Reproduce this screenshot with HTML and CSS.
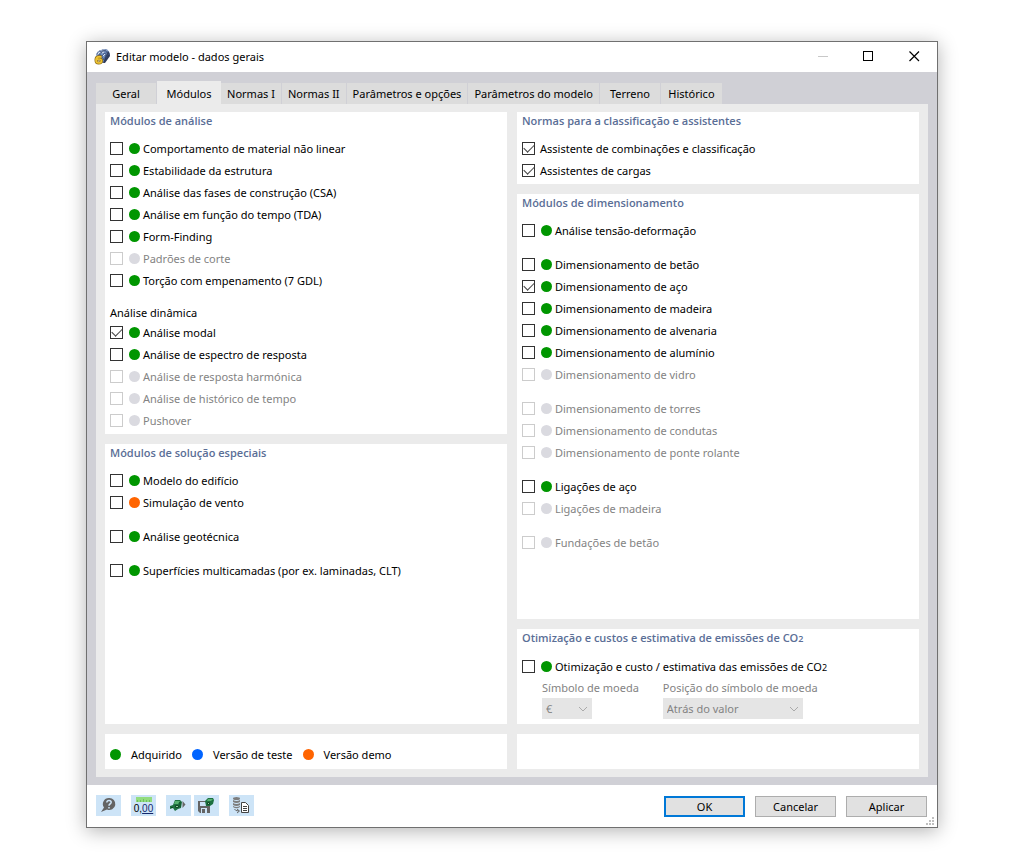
FILE: index.html
```html
<!DOCTYPE html>
<html lang="pt">
  <head>
    <meta charset="utf-8">
    <title>Editar modelo - dados gerais</title>
    <link rel="stylesheet" href="styles.css">
  </head>
  <body>
    <div class="window">
      <header class="titlebar">
        <svg class="app-icon" width="17" height="17" viewBox="0 0 17 17">
          <path d="M2 7 Q3 3 7 2 L12 1 Q16 3 16 7 L11 14 L8 15 Z" fill="#6f8cbd"/>
          <path d="M2 7 Q3 3 7 2 L12 1 L14 2 L9 4 Q6 5 5 8 Z" fill="#8fa3c6"/>
          <path d="M14 3 Q16 5 16 8 L11 15 L9 15 Q11 9 14 3 Z" fill="#2f3c5c"/>
          <path d="M3 5 L7 7 L10 12 M5 3 L10 5 L13 10 M8 2 L12 3 L15 7 M4 8 Q6 4 12 2 M7 9 Q9 6 14 4 M9 12 Q11 8 15 6" stroke="#3c4f78" stroke-width="0.7" fill="none"/>
          <path d="M4 6 L6 4 M8 5 L10 4 M9 8 L11 6" stroke="#dbe7f8" fill="none"/>
          <path d="M7.500 8.800 H4.500 Q2 9 2 12 Q2 15 4.700 15 Q7.500 15 7.500 12.700 Q7.500 11 5 11 Q3.500 11 2.500 12" fill="none" stroke="#8a6a14" stroke-width="3"/>
          <path d="M7.500 8.800 H4.500 Q2 9 2 12 Q2 15 4.700 15 Q7.500 15 7.500 12.700 Q7.500 11 5 11 Q3.500 11 2.500 12" fill="none" stroke="#edc233" stroke-width="1.700"/>
        </svg>
        <h1>Editar modelo - dados gerais</h1>
        <div class="window-controls">
          <button type="button" aria-label="Minimizar" disabled>
            <svg width="11" height="11" viewBox="0 0 11 11"><path d="M1 5.500 H11" stroke="#c8c8c8"/></svg>
          </button>
          <button type="button" aria-label="Maximizar">
            <svg width="11" height="11" viewBox="0 0 11 11"><rect x="0.5" y="0.5" width="9" height="9" fill="none" stroke="#000"/></svg>
          </button>
          <button type="button" aria-label="Fechar">
            <svg width="11" height="11" viewBox="0 0 11 11"><path d="M0.5 0.5 L10 10 M10 0.5 L0.5 10" stroke="#000" stroke-width="1.2"/></svg>
          </button>
        </div>
      </header>

      <main class="content">
        <div class="tabs" role="tablist">
          <button type="button" class="tab" role="tab">Geral</button>
          <button type="button" class="tab active" role="tab" aria-selected="true">Módulos</button>
          <button type="button" class="tab" role="tab">Normas I</button>
          <button type="button" class="tab" role="tab">Normas II</button>
          <button type="button" class="tab" role="tab">Parâmetros e opções</button>
          <button type="button" class="tab" role="tab">Parâmetros do modelo</button>
          <button type="button" class="tab" role="tab">Terreno</button>
          <button type="button" class="tab" role="tab">Histórico</button>
        </div>

        <div class="tab-content" role="tabpanel">
          <div class="columns">
            <div class="column">
              <section class="card">
                <h2>Módulos de análise</h2>
                <label class="option"><input type="checkbox"><span class="dot green"></span>Comportamento de material não linear</label>
                <label class="option"><input type="checkbox"><span class="dot green"></span>Estabilidade da estrutura</label>
                <label class="option"><input type="checkbox"><span class="dot green"></span>Análise das fases de construção (CSA)</label>
                <label class="option"><input type="checkbox"><span class="dot green"></span>Análise em função do tempo (TDA)</label>
                <label class="option"><input type="checkbox"><span class="dot green"></span>Form-Finding</label>
                <label class="option disabled"><input type="checkbox" disabled><span class="dot"></span>Padrões de corte</label>
                <label class="option"><input type="checkbox"><span class="dot green"></span>Torção com empenamento (7 GDL)</label>
                <h3>Análise dinâmica</h3>
                <label class="option"><input type="checkbox" checked><span class="dot green"></span>Análise modal</label>
                <label class="option"><input type="checkbox"><span class="dot green"></span>Análise de espectro de resposta</label>
                <label class="option disabled"><input type="checkbox" disabled><span class="dot"></span>Análise de resposta harmónica</label>
                <label class="option disabled"><input type="checkbox" disabled><span class="dot"></span>Análise de histórico de tempo</label>
                <label class="option disabled"><input type="checkbox" disabled><span class="dot"></span>Pushover</label>
              </section>

              <section class="card grow">
                <h2>Módulos de solução especiais</h2>
                <label class="option"><input type="checkbox"><span class="dot green"></span>Modelo do edifício</label>
                <label class="option"><input type="checkbox"><span class="dot orange"></span>Simulação de vento</label>
                <label class="option spaced"><input type="checkbox"><span class="dot green"></span>Análise geotécnica</label>
                <label class="option spaced"><input type="checkbox"><span class="dot green"></span>Superfícies multicamadas (por ex. laminadas, CLT)</label>
              </section>
            </div>

            <div class="column">
              <section class="card">
                <h2>Normas para a classificação e assistentes</h2>
                <label class="option plain"><input type="checkbox" checked>Assistente de combinações e classificação</label>
                <label class="option plain"><input type="checkbox" checked>Assistentes de cargas</label>
              </section>

              <section class="card grow">
                <h2>Módulos de dimensionamento</h2>
                <label class="option"><input type="checkbox"><span class="dot green"></span>Análise tensão-deformação</label>
                <label class="option spaced"><input type="checkbox"><span class="dot green"></span>Dimensionamento de betão</label>
                <label class="option"><input type="checkbox" checked><span class="dot green"></span>Dimensionamento de aço</label>
                <label class="option"><input type="checkbox"><span class="dot green"></span>Dimensionamento de madeira</label>
                <label class="option"><input type="checkbox"><span class="dot green"></span>Dimensionamento de alvenaria</label>
                <label class="option"><input type="checkbox"><span class="dot green"></span>Dimensionamento de alumínio</label>
                <label class="option disabled"><input type="checkbox" disabled><span class="dot"></span>Dimensionamento de vidro</label>
                <label class="option spaced disabled"><input type="checkbox" disabled><span class="dot"></span>Dimensionamento de torres</label>
                <label class="option disabled"><input type="checkbox" disabled><span class="dot"></span>Dimensionamento de condutas</label>
                <label class="option disabled"><input type="checkbox" disabled><span class="dot"></span>Dimensionamento de ponte rolante</label>
                <label class="option spaced"><input type="checkbox"><span class="dot green"></span>Ligações de aço</label>
                <label class="option disabled"><input type="checkbox" disabled><span class="dot"></span>Ligações de madeira</label>
                <label class="option spaced disabled"><input type="checkbox" disabled><span class="dot"></span>Fundações de betão</label>
              </section>

              <section class="card">
                <h2>Otimização e custos e estimativa de emissões de CO<small>2</small></h2>
                <label class="option"><input type="checkbox"><span class="dot green"></span><span>Otimização e custo / estimativa das emissões de CO<small>2</small></span></label>
                <div class="fields">
                  <div class="field">
                    <label for="currency">Símbolo de moeda</label>
                    <select id="currency" class="currency" disabled><option>€</option></select>
                  </div>
                  <div class="field">
                    <label for="currency-position">Posição do símbolo de moeda</label>
                    <select id="currency-position" class="position" disabled><option>Atrás do valor</option></select>
                  </div>
                </div>
              </section>
            </div>
          </div>

          <div class="columns">
            <div class="card legend">
              <span class="legend-item"><span class="dot green"></span>Adquirido</span>
              <span class="legend-item"><span class="dot blue"></span>Versão de teste</span>
              <span class="legend-item"><span class="dot orange"></span>Versão demo</span>
            </div>
            <div class="card legend"></div>
          </div>
        </div>
      </main>

      <footer class="footer">
        <div class="tools">
          <button type="button" class="tool" aria-label="Ajuda">
            <svg width="25" height="21" viewBox="0 0 25 21">
              <path d="M13 3 A6 6 0 1 1 11 14.500 L5 17 L8 12.500 A6 6 0 0 1 13 3 Z" fill="#646464"/>
              <path d="M10.800 7.500 Q11 5.500 13 5.500 Q15.200 5.500 15.200 7.300 Q15.200 8.300 14 9 Q13 9.600 13 10.800 M13 12 V13.500" fill="none" stroke="#cde4f7" stroke-width="1.500"/>
            </svg>
          </button>
          <button type="button" class="tool units" aria-label="Unidades">
            <svg width="16" height="6" viewBox="0 0 16 6">
              <rect width="16" height="5" fill="#92dc7e"/>
              <path d="M1.500 5 V3 M4.500 5 V3 M7.500 5 V2 M10.500 5 V3 M13.500 5 V3" stroke="#6cbf5e"/>
            </svg>
            <span>0,<u>00</u></span>
          </button>
          <button type="button" class="tool" aria-label="Carregar">
            <svg width="25" height="21" viewBox="0 0 25 21">
              <path d="M4 11 L7 10 L9 5 L14 5 L16 7 L15 13 L12 14 L9 16 L7 13 L4 14 Z" fill="#1d7040"/>
              <path d="M9 6 L14 6 L12 9 L8 9 Z" fill="#56b070"/>
              <path d="M9.500 10.500 H12.500 V12.500 H9.500 Z M5 12.500 H7" fill="#8fd09c" stroke="#0f4a28"/>
              <path d="M14 7 L14 12" stroke="#0f4a28"/>
              <path d="M16.500 6 L19.500 9.500 L16.500 13 Z" fill="#666"/>
            </svg>
          </button>
          <button type="button" class="tool joined" aria-label="Guardar">
            <svg width="25" height="21" viewBox="0 0 25 21">
              <path d="M4 6 H16 V18 H6 L4 16 Z" fill="#646464"/>
              <path d="M6 7 H12 V11 H6 Z M7 13 H13 V18 H7 Z" fill="#cde4f7"/>
              <rect x="8" y="14" width="3" height="4" fill="#646464"/>
              <path d="M11 6 L14 3 L19 3 L20 5 L19 9 L16 11 L12 11 Z" fill="#1d7040"/>
              <path d="M14 4 L19 4 L17 6 L13 6 Z" fill="#56b070"/>
              <path d="M13.500 7.500 H15.500 V9.500 H13.500 Z" fill="#8fd09c" stroke="#0f4a28"/>
            </svg>
          </button>
          <button type="button" class="tool" aria-label="Importar">
            <svg width="25" height="21" viewBox="0 0 25 21">
              <ellipse cx="7.500" cy="3.500" rx="3.500" ry="1.500" fill="#7d7d7d"/>
              <path d="M4 5 Q7.500 7 11 5 V7 Q7.500 9 4 7 Z M4 8 Q7.500 10 11 8 V10 Q7.500 12 4 10 Z M4 11 Q7.500 13 11 11 V12 Q7.500 14.500 4 12 Z" fill="#7d7d7d"/>
              <path d="M5.500 14 Q6 16 10 16 M8 14 L10.500 16 L8 18" stroke="#666" fill="none"/>
              <path d="M12.500 7.500 H16.500 L19.500 10.500 V17.500 H12.500 Z" fill="#fff" stroke="#444"/>
              <path d="M14 11.500 H18 M14 13.500 H18 M14 15.500 H18" stroke="#444"/>
            </svg>
          </button>
        </div>
        <div class="actions">
          <button type="button" class="action default">OK</button>
          <button type="button" class="action">Cancelar</button>
          <button type="button" class="action">Aplicar</button>
        </div>
        <svg class="grip" width="8" height="8" viewBox="0 0 8 8" fill="#bfbfbf">
          <path d="M6 0h2v2h-2z M3 3h2v2h-2z M6 3h2v2h-2z M0 6h2v2h-2z M3 6h2v2h-2z M6 6h2v2h-2z"/>
        </svg>
      </footer>
    </div>
  </body>
</html>
```

FILE: styles.css
```css
* {
  box-sizing: border-box;
}
body {
  margin: 0;
  padding: 41px 90px 40px 86px;
  min-height: 100vh;
  display: flex;
  background: #fff;
  color: #000;
  font-family: "Noto Sans", "Open Sans", sans-serif;
  font-size: 11px;
}
button, select {
  font: inherit;
  color: inherit;
}
button {
  padding: 0;
  border: none;
  background: none;
}
.window {
  flex: 1;
  display: flex;
  flex-direction: column;
  border: 1px solid #707070;
  background: #fff;
  box-shadow: 0 3px 18px rgba(0, 0, 0, 0.3);
}

/* title bar */
.titlebar {
  display: flex;
  align-items: center;
  height: 30px;
  padding: 0 0 2px 7px;
}
.titlebar h1 {
  flex: 1;
  margin: 0 0 0 5px;
  font-size: 11px;
  font-weight: normal;
}
.window-controls {
  display: flex;
}
.window-controls button {
  width: 46px;
  height: 28px;
  display: flex;
  align-items: center;
  justify-content: center;
}

/* tabs */
.content {
  flex: 1;
  display: flex;
  flex-direction: column;
  padding: 9px 9px 8px;
  background: #d0d0d6;
}
.tabs {
  display: flex;
  align-items: flex-end;
}
.tab {
  height: 21px;
  min-width: 61px;
  padding: 0 6px;
  background: #dcdcdc;
  border-right: 1px solid #d0d0d6;
}
.tab:last-child {
  border-right: none;
}
.tab.active {
  height: 23px;
  min-width: 64px;
  padding: 2px 9px 0;
  background: #ebebeb;
  border-right: none;
}
.tab-content {
  flex: 1;
  display: flex;
  flex-direction: column;
  gap: 10px;
  padding: 8px 9px;
  background: #ebebeb;
}
.columns {
  display: flex;
  gap: 10px;
}
.columns:first-child {
  flex: 1;
}
.column {
  flex: 1 1 0;
  display: flex;
  flex-direction: column;
  gap: 10px;
}

/* cards */
.card {
  padding: 0 5px 3px;
  background: #fff;
}
.card.grow {
  flex: 1;
}
.card h2 {
  margin: 0 0 7px;
  font-family: "Open Sans", "Noto Sans", sans-serif;
  font-size: 11px;
  font-weight: 600;
  line-height: 18px;
  color: #5a6e96;
}
.card h3 {
  margin: 14px 0 0;
  font-size: 11px;
  font-weight: normal;
  line-height: 16px;
}
.card small {
  font-size: 9px;
}
.option {
  display: flex;
  align-items: center;
  height: 22px;
}
.option.spaced {
  margin-top: 12px;
}
.option input {
  appearance: none;
  width: 13px;
  height: 13px;
  margin: 0 6px 0 0;
  border: 1px solid #333;
  background: #fff;
}
.option.plain input {
  margin-right: 5px;
}
.option input:checked::before {
  content: "";
  display: block;
  width: 9px;
  height: 5px;
  margin: 1px 0 0 1px;
  border: solid #444;
  border-width: 0 0 1px 1px;
  transform: rotate(-45deg);
}
.option.disabled {
  color: #838383;
}
.option.disabled input {
  border-color: #ccc;
}
.dot {
  width: 11px;
  height: 11px;
  margin-right: 3px;
  border-radius: 50%;
  background: #dadae0;
}
.dot.green {
  background: #009600;
}
.dot.blue {
  background: #0064ff;
}
.dot.orange {
  background: #ff6400;
}

/* currency fields */
.fields {
  display: flex;
  gap: 24px;
  padding: 0 0 2px 20px;
  color: #838383;
}
.field {
  display: flex;
  flex-direction: column;
}
.field label {
  line-height: 21px;
}
.field select {
  appearance: none;
  height: 21px;
  padding: 0 4px;
  border: none;
  border-radius: 0;
  opacity: 1;
  color: #838383;
  background: #e5e5e5 url("data:image/svg+xml,%3Csvg xmlns='http://www.w3.org/2000/svg' width='10' height='6'%3E%3Cpath d='M1 1 L5 5 L9 1' fill='none' stroke='%23aaa'/%3E%3C/svg%3E") no-repeat right 4px center;
}
.currency {
  width: 50px;
}
.position {
  width: 140px;
}

/* legend */
.legend {
  flex: 1 1 0;
  display: flex;
  align-items: center;
  gap: 10px;
  height: 35px;
  padding: 6px 5px 0;
}
.legend-item {
  display: flex;
  align-items: center;
}
.legend .dot {
  margin-right: 10px;
}

/* footer */
.footer {
  position: relative;
  display: flex;
  justify-content: space-between;
  height: 42px;
  padding: 10px 10px 0 9px;
}
.tools, .actions {
  display: flex;
  gap: 10px;
}
.tool {
  width: 25px;
  height: 21px;
  background: #cde4f7;
}
.tool svg {
  display: block;
}
.tool.joined {
  margin-left: -7px;
}
.tool.units {
  display: flex;
  flex-direction: column;
  align-items: center;
  padding-top: 2px;
  font-family: "Liberation Sans", sans-serif;
  font-size: 10px;
  line-height: 11px;
}
.tool.units u {
  color: #14286e;
}
.action {
  width: 81px;
  height: 21px;
  margin-top: 1px;
  border: 1px solid #adadad;
  background: #e1e1e1;
}
.action.default {
  border: 2px solid #0078d7;
}
.grip {
  position: absolute;
  right: 3px;
  bottom: 2px;
}
```
